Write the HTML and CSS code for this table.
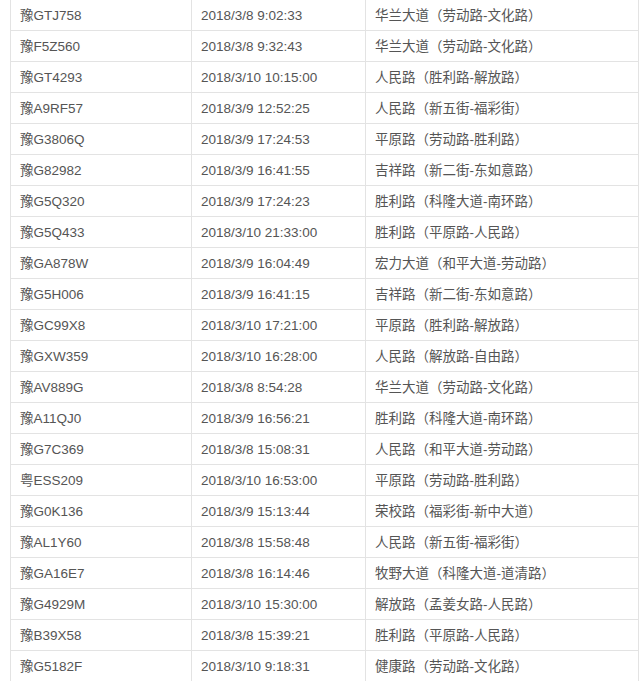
FILE: index.html
```html
<!DOCTYPE html>
<html lang="zh-CN">

<head>
    <meta charset="UTF-8">
    <title>车辆记录</title>
    <link rel="stylesheet" href="styles.css">
</head>

<body>
    <table class="records">
        <colgroup>
            <col class="col-plate">
            <col class="col-time">
            <col class="col-place">
        </colgroup>
        <tbody>
            <tr><td>豫GTJ758</td><td>2018/3/8 9:02:33</td><td>华兰大道（劳动路-文化路）</td></tr>
            <tr><td>豫F5Z560</td><td>2018/3/8 9:32:43</td><td>华兰大道（劳动路-文化路）</td></tr>
            <tr><td>豫GT4293</td><td>2018/3/10 10:15:00</td><td>人民路（胜利路-解放路）</td></tr>
            <tr><td>豫A9RF57</td><td>2018/3/9 12:52:25</td><td>人民路（新五街-福彩街）</td></tr>
            <tr><td>豫G3806Q</td><td>2018/3/9 17:24:53</td><td>平原路（劳动路-胜利路）</td></tr>
            <tr><td>豫G82982</td><td>2018/3/9 16:41:55</td><td>吉祥路（新二街-东如意路）</td></tr>
            <tr><td>豫G5Q320</td><td>2018/3/9 17:24:23</td><td>胜利路（科隆大道-南环路）</td></tr>
            <tr><td>豫G5Q433</td><td>2018/3/10 21:33:00</td><td>胜利路（平原路-人民路）</td></tr>
            <tr><td>豫GA878W</td><td>2018/3/9 16:04:49</td><td>宏力大道（和平大道-劳动路）</td></tr>
            <tr><td>豫G5H006</td><td>2018/3/9 16:41:15</td><td>吉祥路（新二街-东如意路）</td></tr>
            <tr><td>豫GC99X8</td><td>2018/3/10 17:21:00</td><td>平原路（胜利路-解放路）</td></tr>
            <tr><td>豫GXW359</td><td>2018/3/10 16:28:00</td><td>人民路（解放路-自由路）</td></tr>
            <tr><td>豫AV889G</td><td>2018/3/8 8:54:28</td><td>华兰大道（劳动路-文化路）</td></tr>
            <tr><td>豫A11QJ0</td><td>2018/3/9 16:56:21</td><td>胜利路（科隆大道-南环路）</td></tr>
            <tr><td>豫G7C369</td><td>2018/3/8 15:08:31</td><td>人民路（和平大道-劳动路）</td></tr>
            <tr><td>粤ESS209</td><td>2018/3/10 16:53:00</td><td>平原路（劳动路-胜利路）</td></tr>
            <tr><td>豫G0K136</td><td>2018/3/9 15:13:44</td><td>荣校路（福彩街-新中大道）</td></tr>
            <tr><td>豫AL1Y60</td><td>2018/3/8 15:58:48</td><td>人民路（新五街-福彩街）</td></tr>
            <tr><td>豫GA16E7</td><td>2018/3/8 16:14:46</td><td>牧野大道（科隆大道-道清路）</td></tr>
            <tr><td>豫G4929M</td><td>2018/3/10 15:30:00</td><td>解放路（孟姜女路-人民路）</td></tr>
            <tr><td>豫B39X58</td><td>2018/3/8 15:39:21</td><td>胜利路（平原路-人民路）</td></tr>
            <tr><td>豫G5182F</td><td>2018/3/10 9:18:31</td><td>健康路（劳动路-文化路）</td></tr>
        </tbody>
    </table>
</body>

</html>
```

FILE: styles.css
```css
body {
    font-family: "Liberation Sans", "Noto Sans CJK SC", sans-serif;
    margin: 0;
    padding: 0;
    background: #fff;
}

.records {
    border-collapse: collapse;
    table-layout: fixed;
    width: 628px;
    margin: -1px 0 0 10px;
    font-size: 13.5px;
    color: #555;
}

.col-plate {
    width: 181px;
}

.col-time {
    width: 174px;
}

.col-place {
    width: 273px;
}

.records td {
    border: 1px solid #e3e3e3;
    height: 28px;
    padding: 2px 9px 0;
    line-height: 28px;
    white-space: nowrap;
}
```
